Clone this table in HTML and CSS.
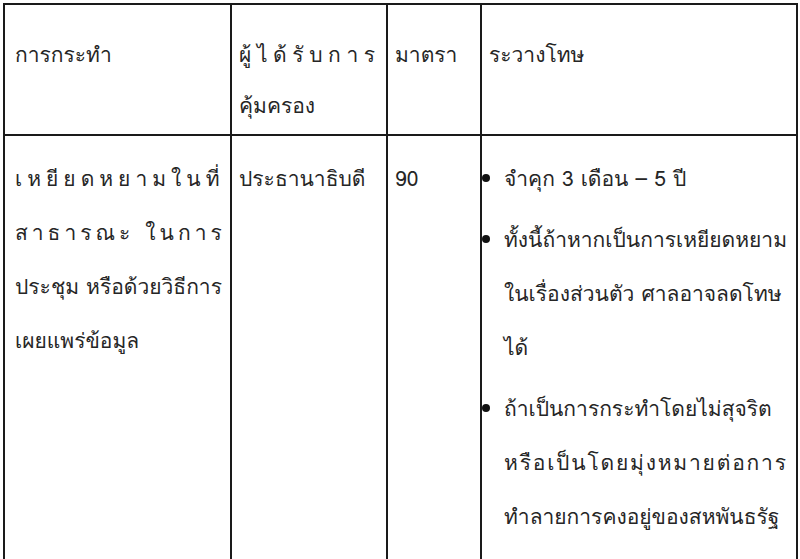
FILE: index.html
```html
<!DOCTYPE html>
<html lang="th">
<head>
<meta charset="utf-8">
<link rel="stylesheet" href="styles.css">
</head>
<body>
<table class="law">
  <colgroup>
    <col class="c1"><col class="c2"><col class="c3"><col class="c4">
  </colgroup>
  <thead>
    <tr class="head">
      <th class="p1">การกระทำ</th>
      <th><span class="wide">ผู้ได้รับการ</span><br>คุ้มครอง</th>
      <th>มาตรา</th>
      <th>ระวางโทษ</th>
    </tr>
  </thead>
  <tbody>
    <tr class="body">
      <td class="p1"><span class="wide2">เหยียดหยามในที่</span><br><span class="wide3">สาธารณะ ในการ</span><br>ประชุม หรือด้วยวิธีการ<br>เผยแพร่ข้อมูล</td>
      <td>ประธานาธิบดี</td>
      <td>90</td>
      <td class="pen">
        <ul class="bul">
          <li>จำคุก 3 เดือน – 5 ปี</li>
          <li>ทั้งนี้ถ้าหากเป็นการเหยียดหยาม<br>ในเรื่องส่วนตัว ศาลอาจลดโทษ<br>ได้</li>
          <li>ถ้าเป็นการกระทำโดยไม่สุจริต<br><span class="wide4">หรือเป็นโดยมุ่งหมายต่อการ</span><br>ทำลายการคงอยู่ของสหพันธรัฐ</li>
        </ul>
      </td>
    </tr>
  </tbody>
</table>
</body>
</html>
```

FILE: styles.css
```css
html, body {
  margin: 0;
  background: #ffffff;
}
body {
  padding: 3px 0 0 3px;
  font-family: Tahoma, "Leelawadee UI", Loma, Garuda, "Noto Sans Thai Looped", "Noto Sans Thai", "Noto Sans", "DejaVu Sans", sans-serif;
  font-size: 21px;
  color: #262626;
  overflow: hidden;
  height: 559px;
  box-sizing: border-box;
}
.law {
  border-collapse: collapse;
  table-layout: fixed;
  width: 793px;
}
.c1 { width: 227px; }
.c2 { width: 156px; }
.c3 { width: 94px; }
.c4 { width: 316px; }
.law th, .law td {
  border: 2px solid #1a1a1a;
  text-align: left;
  vertical-align: top;
  font-weight: normal;
  padding: 24px 2px 0 7px;
  line-height: 51px;
  white-space: nowrap;
  overflow: hidden;
}
.law th.p1, .law td.p1 {
  padding-left: 10px;
}
.head {
  height: 131px;
}
.law td {
  border-bottom: none;
  padding-top: 16px;
  line-height: 54px;
  height: 430px;
}
.wide { letter-spacing: 5.6px; }
.wide2 { letter-spacing: 5px; }
.wide3 { letter-spacing: 4px; }
.wide4 { letter-spacing: 1.8px; }
.law td.pen {
  padding-left: 0;
}
.bul {
  list-style: none;
  margin: 0;
  padding: 0;
}
.bul li {
  position: relative;
  padding-left: 22px;
  margin-bottom: 7px;
}
.bul li::before {
  content: "";
  position: absolute;
  left: 0;
  top: 22px;
  width: 8px;
  height: 8px;
  border-radius: 50%;
  background: #111111;
}
```
